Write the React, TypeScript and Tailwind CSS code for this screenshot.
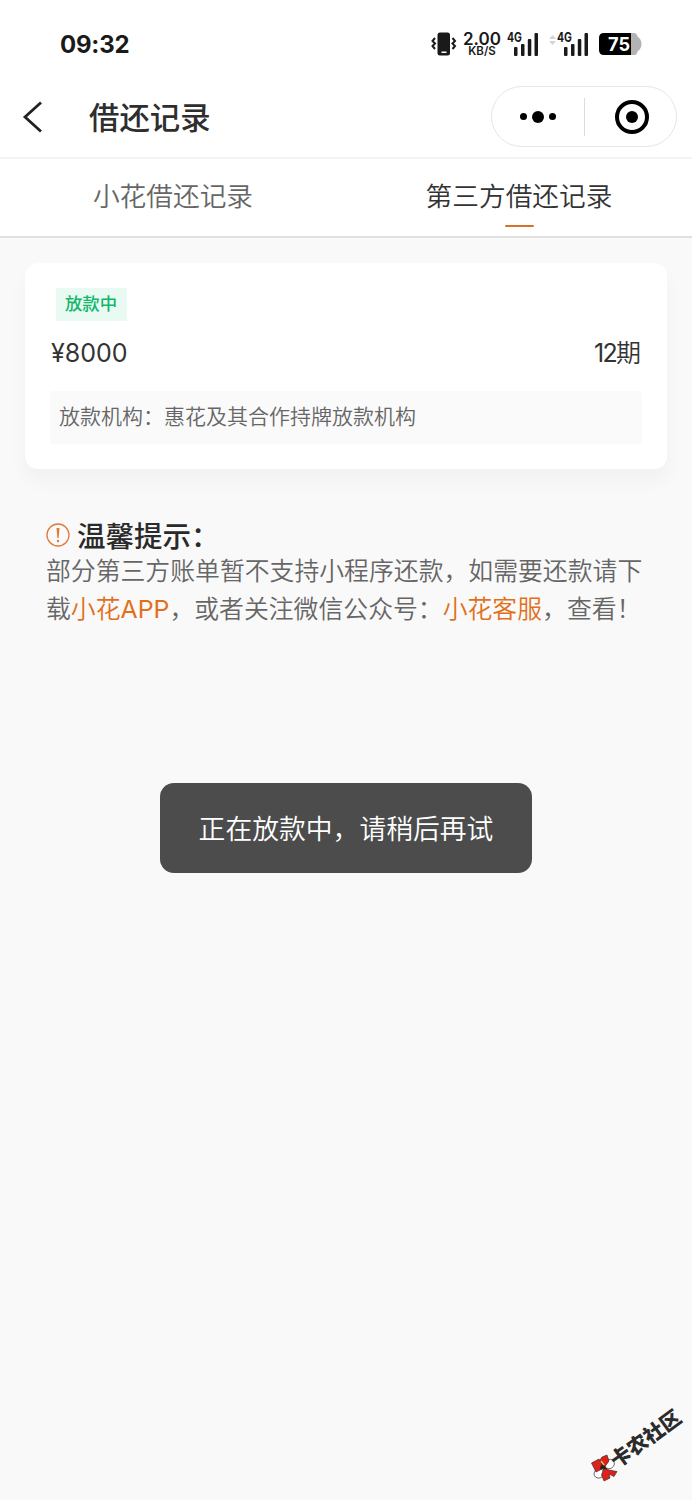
const SignalIcon = () => (
  <svg width="34" height="28" viewBox="0 0 34 28">
    <text x="0" y="12" className="font-bold text-[13px]" textLength="15" lengthAdjust="spacingAndGlyphs" fill="#1a1a1a">
      4G
    </text>
    <g fill="#1a1a1a">
      <rect x="7" y="17" width="3.5" height="9" rx="1" />
      <rect x="14" y="14" width="3.5" height="12" rx="1" />
      <rect x="20.8" y="9" width="3.5" height="17" rx="1" />
      <rect x="27.5" y="3" width="3.5" height="23" rx="1" />
    </g>
  </svg>
);

const StatusBar = () => {
  return (
    <div className="h-20 pl-[60px] pr-[50px] pt-2 flex items-center justify-between text-[#1a1a1a]">
      <span className="pt-[2px] text-[24px] font-bold leading-none tracking-[-0.2px]">09:32</span>
      <div className="flex items-center">
        <svg width="26" height="26" viewBox="0 0 26 26">
          <rect x="6.5" y="1.5" width="12.5" height="23" rx="2.5" fill="#1a1a1a" />
          <rect x="10.5" y="20.5" width="5" height="1.5" fill="#fff" />
          <path d="M4 7L1.5 10L4 12.5L1.5 15L4 18M21.5 7L24 10L21.5 12.5L24 15L21.5 18" fill="none" stroke="#1a1a1a" strokeWidth="2" />
        </svg>
        <div className="ml-[6px] w-[38px] flex flex-col items-center">
          <span className="text-[17px] leading-[14px] font-semibold">2.00</span>
          <span className="text-[11.5px] leading-[11px] font-semibold">KB/S</span>
        </div>
        <div className="ml-[6px] flex">
          <SignalIcon />
        </div>
        <svg className="ml-[7px] -mt-[8px]" width="9" height="12" viewBox="0 0 9 12" fill="#d4d4d4">
          <path d="M1 5L4.5 1L8 5ZM1 7L4.500 11L8 7Z" />
        </svg>
        <SignalIcon />
        <svg className="ml-[8px]" width="43" height="24" viewBox="0 0 43 24">
          <path d="M32 1H35Q38 1 38.500 4.500Q42.500 7 42.500 12Q42.500 17 38.500 19.500Q38 23 35 23H32Z" fill="#b3b3b3" />
          <path d="M5 1H32V23H5Q0 23 0 18V6Q0 1 5 1Z" fill="#000" />
          <text x="9" y="19" className="font-bold text-[19px]" textLength="22" lengthAdjust="spacingAndGlyphs" fill="#fff">
            75
          </text>
        </svg>
      </div>
    </div>
  );
};

const NavBar = () => {
  return (
    <div className="h-[79px] pl-[22px] pr-[15px] pb-[4px] flex items-center border-b-2 border-[#f4f4f4]">
      <svg width="22" height="32" viewBox="0 0 22 32" fill="none" stroke="#222" strokeWidth="2.800">
        <path d="M19 1.500L3 16L19 30.500" />
      </svg>
      <h1 className="ml-[45px] pt-[3px] text-[30.4px] leading-[40px] font-medium text-[#2e2e2e]">借还记录</h1>
      <div className="ml-auto w-[186px] h-[61px] rounded-full border border-[#e6e6e6] flex items-center">
        <div className="w-[92px] flex items-center justify-center gap-[5px]">
          <i className="size-[7px] rounded-full bg-black" />
          <i className="size-[12px] rounded-full bg-black" />
          <i className="size-[7px] rounded-full bg-black" />
        </div>
        <div className="w-px h-[38px] bg-[#dcdcdc]" />
        <div className="flex-1 pl-[2px] flex justify-center">
          <div className="size-[34px] rounded-full border-[4px] border-black flex items-center justify-center">
            <i className="size-[12px] rounded-full bg-black" />
          </div>
        </div>
      </div>
    </div>
  );
};

const Tabs = () => {
  return (
    <div className="h-[79px] flex text-[26.7px] leading-[36px] font-[350] border-b-2 border-[#e0e0e0]">
      <div className="flex-1 pt-[19px] text-center text-[#666]">小花借还记录</div>
      <div className="flex-1 pt-[19px] flex flex-col items-center text-[#333]">
        <span>第三方借还记录</span>
        <div className="mt-[11px] w-[29px] h-[2px] rounded-full bg-[#d96f2b]" />
      </div>
    </div>
  );
};

const LoanCard = () => {
  return (
    <div className="mx-[25px] mt-[25px] h-[206px] px-[25px] pt-[25px] bg-white rounded-[13px] shadow-[0_12px_20px_rgba(0,0,0,0.035)]">
      <div className="ml-[6px] w-[71px] h-[33px] pr-px bg-[#e9faf3] text-[#12b76a] text-[17.4px] leading-[32px] font-medium text-center">
        放款中
      </div>
      <div className="mt-[14px] flex justify-between text-[25px] leading-[36px] text-[#333]">
        <span className="pl-px">¥8000</span>
        <span className="pr-px font-[350]">
          <span className="font-normal tracking-[-1.7px]">12</span>期
        </span>
      </div>
      <div className="mt-[20px] h-[53px] pl-[9px] bg-[#fafafa] rounded-[4px] text-[21px] leading-[52px] font-[350] text-[#666]">
        放款机构：惠花及其合作持牌放款机构
      </div>
    </div>
  );
};

const Tips = () => {
  return (
    <div className="mt-[47px] pl-[46px]">
      <div className="flex items-center">
        <svg width="24" height="24" viewBox="0 0 24 24">
          <circle cx="12" cy="12" r="11" fill="none" stroke="#e07a3a" strokeWidth="1.300" />
          <path d="M10.500 5H13.500L12.600 15H11.400Z" fill="#e07a3a" />
          <circle cx="12" cy="18" r="1.200" fill="#e07a3a" />
        </svg>
        <h2 className="ml-[7px] pt-[2px] -mb-[2px] text-[28.5px] leading-[38px] font-medium text-[#2a2a2a]">温馨提示：</h2>
      </div>
      <p className="text-[24.85px] leading-[38px] -mt-[2px] whitespace-nowrap font-[350] text-[#666]">
        部分第三方账单暂不支持小程序还款，如需要还款请下
        <br />载
        <span className="text-[#e1701c]">
          小花<span className="font-normal">APP</span>
        </span>
        ，或者关注微信公众号：
        <span className="text-[#e1701c]">小花客服</span>，查看！
      </p>
    </div>
  );
};

const Watermark = () => {
  return (
    <>
      <svg className="absolute left-[590px] top-[1454px]" width="28" height="28" viewBox="0 0 28 28" stroke="#222" strokeWidth="0.600">
        <ellipse cx="19.500" cy="10" rx="5" ry="4.500" fill="#fff" transform="rotate(-35 19.500 10)" />
        <ellipse cx="9" cy="19.500" rx="5" ry="4.500" fill="#fff" transform="rotate(-25 9 19.500)" />
        <path d="M1.500 9L9 5L14 14L6 18ZM10 6L12 3L17 1L19 7L14 14ZM14 14L19 16L27 17.500L24 22.500L19 20L20 24L14 27L11.500 21Z" fill="#e0211b" />
        <path d="M12 10L17 15L10 14.500Z" fill="#222" />
        <path d="M11 7L14 11" stroke="#f2c230" strokeWidth="1.500" />
      </svg>
      <div className="absolute left-[605px] top-[1425px] w-[82px] text-[20.4px] leading-[28px] font-black text-[#2b2b2b] text-center whitespace-nowrap -rotate-[36deg]">
        卡农社区
      </div>
    </>
  );
};

export default function App() {
  return (
    <div className="relative w-[692px] h-[1500px] overflow-hidden bg-[#f9f9f9] font-['Inter','Noto_Sans_CJK_SC',sans-serif]">
      <div className="bg-white">
        <StatusBar />
        <NavBar />
        <Tabs />
      </div>
      <LoanCard />
      <Tips />
      <div className="absolute left-[160px] top-[783px] w-[372px] h-[90px] rounded-[14px] bg-[#4c4c4c] text-white text-[26.8px] leading-[92px] font-[350] text-center whitespace-nowrap">
        正在放款中，请稍后再试
      </div>
      <Watermark />
    </div>
  );
}
